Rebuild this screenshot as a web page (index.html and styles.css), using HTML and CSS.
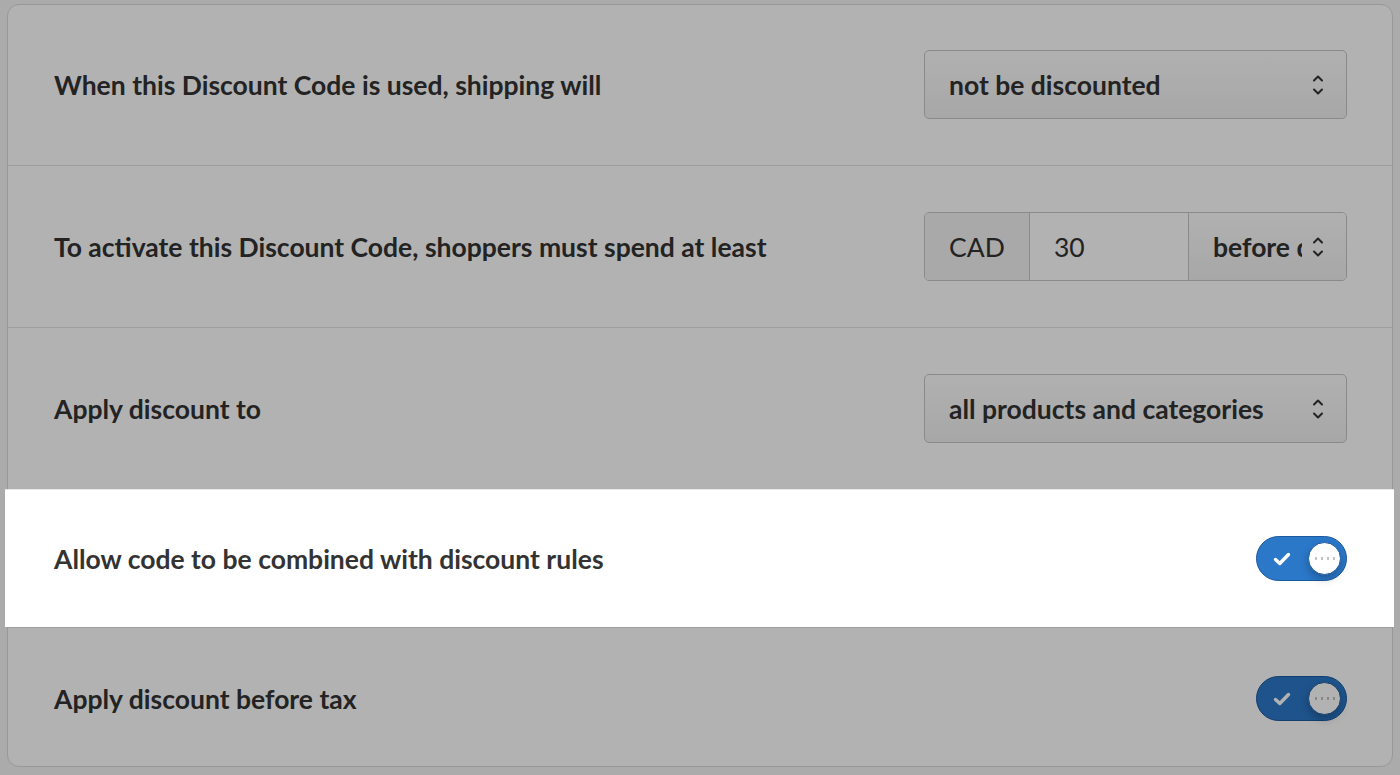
FILE: index.html
```
<!DOCTYPE html>
<html>
<head>
	<title>Discount code settings</title>
	<link rel="stylesheet" href="styles.css">
</head>
<body>
	<div class="card">
		<div class="row">
			<div class="label">When this Discount Code is used, shipping will</div>
			<div class="select">
				<span class="select-text">not be discounted</span>
				<svg class="chevrons" width="12" height="22" viewBox="0 0 12 22"><path d="M2 6.5 L6 2.5 L10 6.5 M2 15.5 L6 19.5 L10 15.5" fill="none" stroke="#333" stroke-width="2" stroke-linecap="round" stroke-linejoin="round"/></svg>
			</div>
		</div>
		<div class="row">
			<div class="label">To activate this Discount Code, shoppers must spend at least</div>
			<div class="group">
				<div class="addon">CAD</div>
				<div class="amount">30</div>
				<div class="group-select">
					<span class="select-text">before discounts</span>
					<svg class="chevrons" width="12" height="22" viewBox="0 0 12 22"><path d="M2 6.5 L6 2.5 L10 6.5 M2 15.5 L6 19.5 L10 15.5" fill="none" stroke="#333" stroke-width="2" stroke-linecap="round" stroke-linejoin="round"/></svg>
				</div>
			</div>
		</div>
		<div class="row">
			<div class="label">Apply discount to</div>
			<div class="select">
				<span class="select-text">all products and categories</span>
				<svg class="chevrons" width="12" height="22" viewBox="0 0 12 22"><path d="M2 6.5 L6 2.5 L10 6.5 M2 15.5 L6 19.5 L10 15.5" fill="none" stroke="#333" stroke-width="2" stroke-linecap="round" stroke-linejoin="round"/></svg>
			</div>
		</div>
		<div class="row row-focus">
			<div class="label">Allow code to be combined with discount rules</div>
			<div class="toggle">
				<svg class="check" width="18" height="14" viewBox="0 0 18 14"><path d="M2.5 7.5 L6.8 11.5 L15.5 2.5" fill="none" stroke="#fff" stroke-width="3.4" stroke-linecap="round" stroke-linejoin="round"/></svg>
				<div class="knob"><span></span><span></span><span></span><span></span></div>
			</div>
		</div>
		<div class="row row-last">
			<div class="label">Apply discount before tax</div>
			<div class="toggle">
				<svg class="check" width="18" height="14" viewBox="0 0 18 14"><path d="M2.5 7.5 L6.8 11.5 L15.5 2.5" fill="none" stroke="#fff" stroke-width="3.4" stroke-linecap="round" stroke-linejoin="round"/></svg>
				<div class="knob"><span></span><span></span><span></span><span></span></div>
			</div>
		</div>
	</div>
	<div class="backdrop"></div>
</body>
</html>
```

FILE: styles.css
```
body {
	margin: 0;
	padding: 4px 7px 7px;
	background: #f5f5f5;
	font-family: Lato, 'Liberation Sans', sans-serif;
	color: #333;
}
.card {
	background: #fff;
	border: 1px solid #dadada;
	border-radius: 12px;
}
.row {
	display: flex;
	align-items: center;
	justify-content: space-between;
	padding: 46px 45px 46px 46px;
	border-top: 1px solid #e2e2e2;
}
.row:first-child {
	border-top: none;
	padding-top: 45px;
}
.row-last {
	padding-top: 48px;
	padding-bottom: 45px;
}
.label {
	font-size: 26.5px;
	font-weight: 700;
}
/* selects */
.select {
	width: 423px;
	height: 69px;
	box-sizing: border-box;
	display: flex;
	align-items: center;
	padding: 0 22px 0 24px;
	border: 1px solid #c6c6c6;
	border-radius: 5px;
	background: linear-gradient(#fdfdfd, #f0f0f0);
}
.select-text {
	flex: 1;
	font-size: 26.5px;
	font-weight: 700;
	white-space: nowrap;
	overflow: hidden;
}
.chevrons {
	flex: none;
	margin-left: 16px;
}
.group {
	width: 423px;
	height: 69px;
	box-sizing: border-box;
	display: flex;
	border: 1px solid #c6c6c6;
	border-radius: 5px;
	font-size: 26.5px;
}
.addon {
	width: 104px;
	display: flex;
	align-items: center;
	justify-content: center;
	background: #f2f2f2;
	border-right: 1px solid #c6c6c6;
	border-radius: 4px 0 0 4px;
}
.amount {
	width: 134px;
	display: flex;
	align-items: center;
	padding-left: 24px;
	border-right: 1px solid #c6c6c6;
	background: #fff;
}
.group-select {
	flex: 1;
	min-width: 0;
	display: flex;
	align-items: center;
	padding: 0 22px 0 24px;
	background: linear-gradient(#fdfdfd, #f0f0f0);
	border-radius: 0 4px 4px 0;
}
.group-select .chevrons {
	margin-left: 10px;
}
/* toggles */
.toggle {
	width: 91px;
	height: 45px;
	box-sizing: border-box;
	display: flex;
	align-items: center;
	justify-content: space-between;
	padding: 0 5px 0 16px;
	background: #2b78c9;
	border: 1px solid #1b5a9e;
	border-radius: 23px;
}
.check {
	display: block;
}
.knob {
	width: 33px;
	height: 33px;
	border-radius: 50%;
	background: #fff;
	border: 1px solid #1b5a9e;
	box-sizing: border-box;
	display: flex;
	align-items: center;
	justify-content: center;
	gap: 4px;
	box-shadow: 0 4px 8px rgba(0, 0, 0, 0.25);
}
.knob span {
	width: 2px;
	height: 3px;
	background: #c2c2c2;
}
/* tour highlight */
.backdrop {
	position: fixed;
	top: 0;
	left: 0;
	right: 0;
	bottom: 0;
	background: rgba(0, 0, 0, 0.3);
	z-index: 10;
}
.row-focus {
	position: relative;
	z-index: 11;
	background: #fff;
	margin: 0 -2px 0 -3px;
	padding-left: 49px;
	padding-right: 47px;
	border-top-color: #e8e8e8;
}
```
